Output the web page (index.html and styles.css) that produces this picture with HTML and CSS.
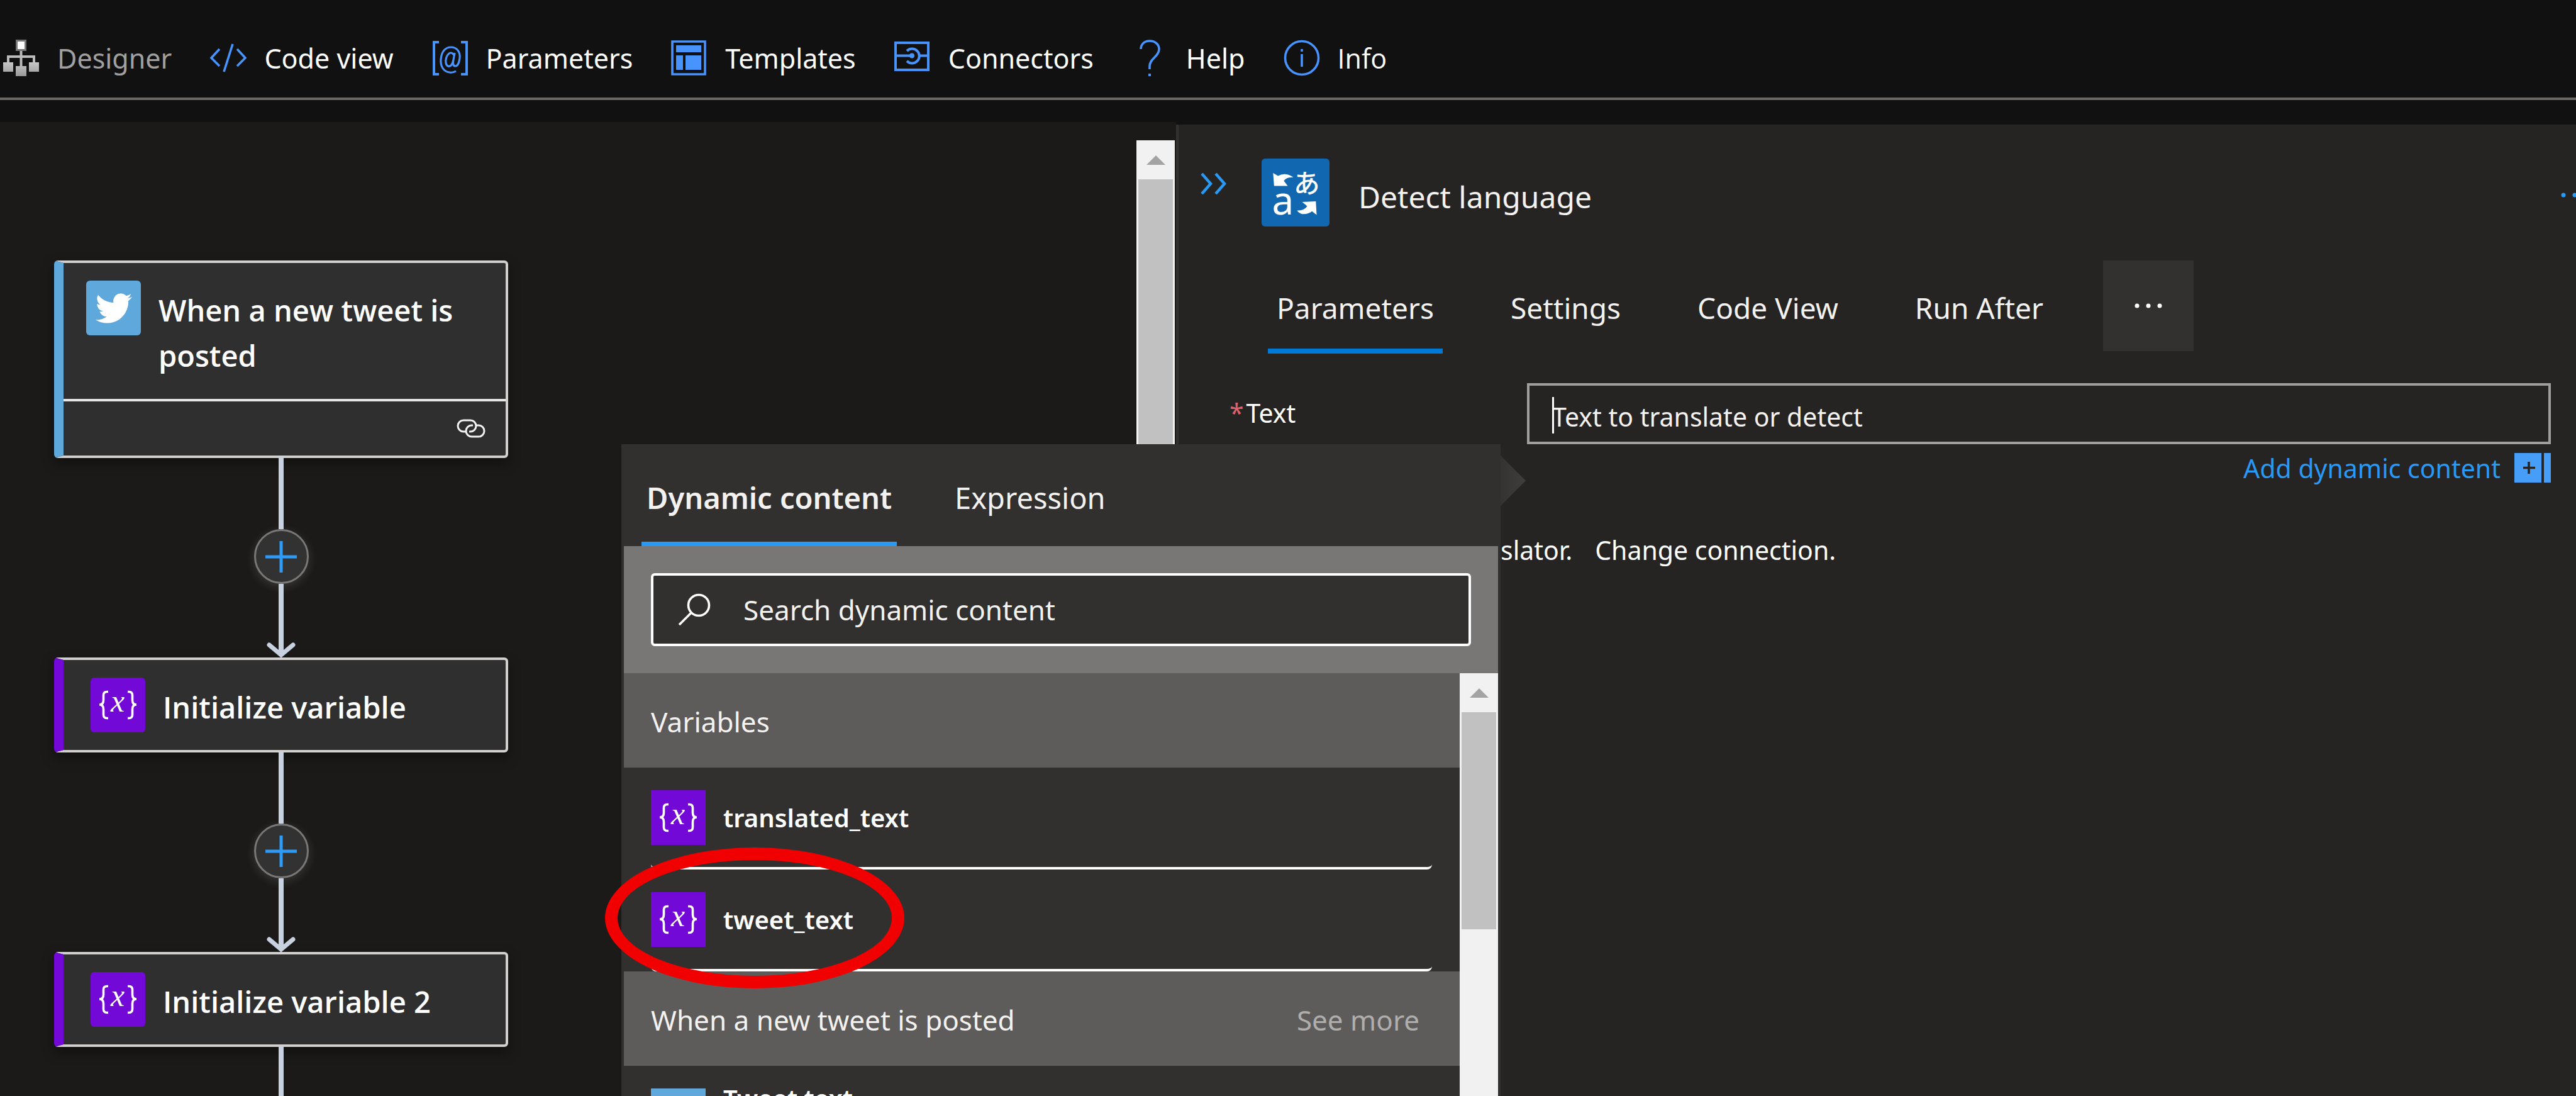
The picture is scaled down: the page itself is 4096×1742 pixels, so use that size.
FILE: index.html
```html
<!DOCTYPE html>
<html lang="en">
<head>
<meta charset="utf-8">
<title>Logic app designer</title>
<link rel="stylesheet" href="styles.css">
</head>
<body>
<svg class="defs" aria-hidden="true">
  <symbol id="braces" viewBox="0 0 87 87">
    <g fill="none" stroke="#fff" stroke-width="3.6">
      <path d="M28 22.500H26Q20.500 22.500 20.500 28V36Q20.500 43 14 43Q20.500 43 20.500 50V59Q20.500 64.500 26 64.500H28"/>
      <path d="M59 22.500H61Q66.500 22.500 66.500 28V36Q66.500 43 73 43Q66.500 43 66.500 50V59Q66.500 64.500 61 64.500H59"/>
    </g>
  </symbol>
</svg>
<div class="page">
  <header class="toolbar">
    <button class="tool tool-off" type="button">
      <svg class="tool-icon" viewBox="0 0 58 58"><defs><linearGradient id="gr" x1="0" y1="0" x2="0" y2="1"><stop offset="0" stop-color="#c8c8c8"/><stop offset="1" stop-color="#999"/></linearGradient></defs><path d="M28.500 18V42M8 37V27H49V37" fill="none" stroke="#bbb" stroke-width="4"/><rect x="21.500" y="1.500" width="14" height="15" fill="#fff" stroke="#777" stroke-width="3"/><path d="M0 36H16V51H0ZM20 42H37V58H20ZM41 36H57V51H41Z" fill="url(#gr)"/></svg>
      Designer
    </button>
    <button class="tool" type="button">
      <svg class="tool-icon" viewBox="0 0 58 58"><path d="M15 15L2 29L15 42M43 15L56 29L43 42M36 7L22 51" fill="none" stroke="#4894fe" stroke-width="3.6"/></svg>
      Code view
    </button>
    <button class="tool" type="button">
      <svg class="tool-icon" viewBox="0 0 58 58"><path d="M11 4H3V55H11M46 4H55V55H46" fill="none" stroke="#4894fe" stroke-width="4"/><path d="M38 50Q33 53 28 52C18 51 13 42 14 31C15 19 21 12 30 12C40 12 45 20 44 29C43 37 41 42 37 42C33 42 33 37 34 32L36 21M35 25C33 21 30 20 27 22C23 25 21 32 22 37C23 43 28 44 31 40Q33 37 34 32" fill="none" stroke="#4894fe" stroke-width="3.2"/></svg>
      Parameters
    </button>
    <button class="tool" type="button">
      <svg class="tool-icon" viewBox="0 0 58 58"><path d="M2 3H54V55H2Z" fill="none" stroke="#4894fe" stroke-width="3.6"/><path d="M8 9H48V20H8ZM8 25H19V48H8ZM23 25H48V48H23Z" fill="#4894fe"/></svg>
      Templates
    </button>
    <button class="tool" type="button">
      <svg class="tool-icon" viewBox="0 0 58 58"><path d="M2 5H54V48H2ZM2 25.500H28M40 25.500H54M20 18A11.500 11.500 0 1 1 20 34" fill="none" stroke="#4894fe" stroke-width="4"/><circle cx="28" cy="25.500" r="4" fill="#4894fe"/></svg>
      Connectors
    </button>
    <button class="tool" type="button">
      <svg class="tool-icon" viewBox="0 0 58 58"><path d="M14 15C14 7 20 2 28 2C37 2 43 8 43 15C43 27 28 30 28 42V47" fill="none" stroke="#4894fe" stroke-width="3.600"/><path d="M26 54H30V58H26Z" fill="#4894fe"/></svg>
      Help
    </button>
    <button class="tool sans-i" type="button">
      <svg class="tool-icon" viewBox="0 0 58 58"><circle cx="29" cy="29" r="26.500" fill="none" stroke="#4894fe" stroke-width="3.600"/><path d="M29 15V19M29 23V43" stroke="#4894fe" stroke-width="3.600"/></svg>
      Info
    </button>
  </header>

  <main class="work">
    <section class="canvas" aria-label="Workflow">
      <div class="flow">
        <article class="card card-trigger">
          <div class="card-main">
            <span class="card-icon twitter"><svg viewBox="0 0 24 24" width="58" height="58"><path fill="#fff" d="M23.953 4.570a10 10 0 0 1-2.825.775 4.958 4.958 0 0 0 2.163-2.723c-.951.555-2.005.959-3.127 1.184a4.920 4.920 0 0 0-8.384 4.482C7.690 8.095 4.067 6.130 1.640 3.162a4.822 4.822 0 0 0-.666 2.475c0 1.710.87 3.213 2.188 4.096a4.904 4.904 0 0 1-2.228-.616v.06a4.923 4.923 0 0 0 3.946 4.827 4.996 4.996 0 0 1-2.212.085 4.936 4.936 0 0 0 4.604 3.417 9.867 9.867 0 0 1-6.102 2.105c-.390 0-.779-.023-1.170-.067a13.995 13.995 0 0 0 7.557 2.209c9.053 0 13.998-7.496 13.998-13.985 0-.210 0-.420-.015-.630A9.935 9.935 0 0 0 24 4.590z"/></svg></span>
            <h2 class="card-title">When a new tweet is posted</h2>
          </div>
          <div class="card-foot"><svg viewBox="0 0 46 30" width="46" height="30" fill="none" stroke="#f3f2f1" stroke-width="3"><path d="M15 20H11A9 9 0 0 1 11 2H22A9 9 0 0 1 22 20H20"/><path d="M26 10H24A9 9 0 0 0 24 28H35A9 9 0 0 0 35 10H31"/></svg></div>
        </article>
        <div class="link">
          <i class="line line-top"></i>
          <button class="add" type="button" aria-label="Add step"><svg viewBox="0 0 50 50" width="50" height="50"><path d="M25 0V50M0 25H50" stroke="#2f9bf8" stroke-width="5"/></svg></button>
          <i class="line line-end"></i>
          <svg class="arrow" viewBox="0 0 46 24"><path d="M4 4L23 20L42 4" fill="none" stroke="#c8d1e0" stroke-width="7" stroke-linecap="round"/></svg>
        </div>
        <article class="card card-var">
          <div class="card-main">
            <svg class="card-icon variable" viewBox="0 0 87 87"><use href="#braces"/><text x="43" y="54" class="variable-x">x</text></svg>
            <h2 class="card-title">Initialize variable</h2>
          </div>
        </article>
        <div class="link">
          <i class="line line-top"></i>
          <button class="add" type="button" aria-label="Add step"><svg viewBox="0 0 50 50" width="50" height="50"><path d="M25 0V50M0 25H50" stroke="#2f9bf8" stroke-width="5"/></svg></button>
          <i class="line line-end"></i>
          <svg class="arrow" viewBox="0 0 46 24"><path d="M4 4L23 20L42 4" fill="none" stroke="#c8d1e0" stroke-width="7" stroke-linecap="round"/></svg>
        </div>
        <article class="card card-var">
          <div class="card-main">
            <svg class="card-icon variable" viewBox="0 0 87 87"><use href="#braces"/><text x="43" y="54" class="variable-x">x</text></svg>
            <h2 class="card-title">Initialize variable 2</h2>
          </div>
        </article>
        <i class="line line-rest"></i>
      </div>
      <div class="scrollbar canvas-scroll">
        <span class="scroll-up"></span>
        <span class="scroll-thumb"></span>
      </div>
    </section>

    <section class="panel" aria-label="Detect language">
      <header class="panel-head">
        <button class="collapse" type="button" aria-label="Collapse"><svg viewBox="0 0 44 34" width="44" height="34"><path d="M3 1L17 17L3 33M25 1L39 17L25 33" fill="none" stroke="#2899f5" stroke-width="4.500"/></svg></button>
        <svg class="panel-icon" viewBox="0 0 348 348">
          <rect width="348" height="348" rx="18" fill="#1267b1"/>
          <path fill="#fff" d="M59 74L84 89Q112 74 140 84Q154 88 162 97Q128 94 114 114L134 140H64ZM282 288L258 270Q240 286 208 284Q190 280 182 266Q216 268 234 244L208 222L278 219Z"/>
          <text x="53" y="286" class="glyph-a">a</text>
          <text x="164" y="176" class="glyph-ja">あ</text>
        </svg>
        <h1 class="panel-title">Detect language</h1>
        <button class="panel-more" type="button" aria-label="More commands"><svg viewBox="0 0 44 8" width="44" height="8" fill="#2899f5"><circle cx="4" cy="4" r="3.500"/><circle cx="22" cy="4" r="3.500"/><circle cx="40" cy="4" r="3.500"/></svg></button>
      </header>
      <nav class="tabs">
        <button class="tab tab-on" type="button">Parameters</button>
        <button class="tab" type="button">Settings</button>
        <button class="tab" type="button">Code View</button>
        <button class="tab" type="button">Run After</button>
        <button class="tab-more" type="button" aria-label="More tabs"><svg viewBox="0 0 44 8" width="44" height="8" fill="#fff"><circle cx="4" cy="4" r="3.500"/><circle cx="22" cy="4" r="3.500"/><circle cx="40" cy="4" r="3.500"/></svg></button>
      </nav>
      <div class="field">
        <label class="field-label" for="text"><span class="required">*</span>Text</label>
        <span class="field-box"><input class="field-input" id="text" type="text" placeholder="Text to translate or detect"></span>
      </div>
      <div class="dynamic">
        <a class="dynamic-link" href="#dynamic">Add dynamic content</a>
        <svg viewBox="0 0 58 47" width="58" height="47"><path d="M0 0H43V47H0ZM47 0H58V47H47Z" fill="#479ef8"/><path d="M23 14V33M14 23.500H33" stroke="#252423" stroke-width="3.600"/></svg>
      </div>
      <p class="connection"><span>slator.</span><a class="connection-link" href="#connection">Change connection.</a></p>
    </section>
  </main>

  <aside class="popup" id="dynamic" aria-label="Dynamic content">
    <nav class="popup-tabs">
      <button class="popup-tab popup-tab-on" type="button">Dynamic content</button>
      <button class="popup-tab" type="button">Expression</button>
    </nav>
    <div class="popup-body">
      <div class="search">
        <label class="search-box">
          <svg viewBox="0 0 52 52" width="52" height="52" fill="none" stroke="#fff" stroke-width="3.600"><circle cx="33" cy="19" r="16.500"/><path d="M21 31L2 50"/></svg>
          <input class="search-input" type="search" placeholder="Search dynamic content" aria-label="Search dynamic content">
        </label>
      </div>
      <div class="results">
        <div class="groups">
          <div class="group-head"><h3 class="group-title">Variables</h3></div>
          <ul class="items">
            <li><button class="item" type="button"><svg class="item-icon variable" viewBox="0 0 87 87"><use href="#braces"/><text x="43" y="54" class="variable-x">x</text></svg>translated_text</button></li>
            <li><button class="item" type="button"><svg class="item-icon variable" viewBox="0 0 87 87"><use href="#braces"/><text x="43" y="54" class="variable-x">x</text></svg>tweet_text</button></li>
          </ul>
          <div class="group-head"><h3 class="group-title">When a new tweet is posted</h3><button class="see-more" type="button">See more</button></div>
          <ul class="items">
            <li><button class="item item-tall" type="button"><span class="item-icon twitter"></span>Tweet text</button></li>
          </ul>
        </div>
        <div class="scrollbar">
          <span class="scroll-up"></span>
          <span class="scroll-thumb scroll-thumb-short"></span>
        </div>
      </div>
    </div>
  </aside>
  <svg class="beak" viewBox="0 0 40 80"><defs><linearGradient id="bk"><stop offset="0" stop-color="#343331"/><stop offset="1" stop-color="#3f3e3c"/></linearGradient></defs><path d="M0 0L40 40L0 80Z" fill="url(#bk)"/></svg>
  <div class="marker"></div>
</div>
</body>
</html>
```

FILE: styles.css
```css
* { box-sizing: border-box; }
body {
  margin: 0;
  background: #111;
  color: #fff;
  font-family: "Noto Sans", "Open Sans", sans-serif;
  font-size: 44px;
}
h1, h2, h3, p, ul { margin: 0; padding: 0; font-weight: 400; font-size: inherit; list-style: none; }
button, input {
  margin: 0;
  padding: 0;
  border: 0;
  background: none;
  color: inherit;
  font: inherit;
}
button { white-space: nowrap; }
a { text-decoration: none; color: inherit; }
svg { display: block; flex: none; }
input { outline: 0; }
input::placeholder { color: #f3f2f1; opacity: 1; }
.defs { position: absolute; width: 0; height: 0; }
.variable-x { font: italic 50px "Liberation Serif", serif; fill: #fff; text-anchor: middle; }

.page {
  position: relative;
  display: flex;
  flex-direction: column;
  height: 100vh;
  overflow: hidden;
}

/* Toolbar */
.toolbar {
  display: flex;
  gap: 61px;
  padding: 48px 5px 19px;
  border-bottom: 4px solid #6a6866;
  margin-bottom: 35px;
}
.tool { display: flex; align-items: center; gap: 28px; height: 88px; font-size: 43px; }
.tool-off { color: #a0a0a0; }
.tool-icon { width: 58px; height: 58px; }
.sans-i { font-family: "Open Sans", sans-serif; }

.work {
  flex: 1;
  min-height: 0;
  display: grid;
  grid-template-columns: minmax(0, 1870fr) minmax(0, 2226fr);
}

/* Workflow canvas */
.canvas {
  display: flex;
  justify-content: space-between;
  min-height: 0;
  padding-top: 29px;
  background: #1b1a19;
}
.flow {
  display: flex;
  flex-direction: column;
  align-items: center;
  width: 722px;
  margin-left: 86px;
  padding-top: 191px;
}
.card {
  flex: none;
  width: 100%;
  border: 4px solid #d2d0ce;
  border-left: 15px solid #7309d6;
  border-radius: 6px;
  background: #2f2f2f;
  box-shadow: 0 8px 20px rgba(0, 0, 0, .4);
}
.card-trigger { border-left-color: #5fa8dc; }
.card-main { display: flex; align-items: flex-start; gap: 28px; height: 143px; padding: 28px 43px; }
.card-trigger .card-main { height: 216px; padding-left: 36px; padding-right: 36px; }
.card-icon { display: flex; align-items: center; justify-content: center; flex: none; width: 87px; height: 87px; border-radius: 6px; }
.twitter { background: #5fa8dc; }
.variable { background: #7309d6; }
.card-title { font: 600 47px/72px "Open Sans", sans-serif; padding-top: 11px; }
.card-foot { display: flex; justify-content: flex-end; align-items: center; height: 90px; padding: 0 32px 0 0; border-top: 4px solid #e8e6e4; }
.link { position: relative; display: flex; flex-direction: column; align-items: center; }
.line { flex: none; width: 8px; background: #c8d1e0; }
.line-top { height: 113px; }
.line-end { height: 113px; margin-bottom: 4px; }
.line-rest { flex: 1; }
.add {
  display: flex;
  align-items: center;
  justify-content: center;
  width: 87px;
  height: 87px;
  border: 3px solid #7a7876;
  border-radius: 50%;
  background: #323232;
  box-shadow: 0 4px 16px rgba(255, 255, 255, .14);
}
.arrow { position: absolute; bottom: 0; width: 46px; height: 24px; }

/* Scrollbars */
.scrollbar { display: flex; flex-direction: column; width: 61px; padding: 0 3px; background: #f1f1f1; }
.scroll-up { display: flex; justify-content: center; align-items: center; height: 62px; flex: none; }
.scroll-up::before { content: ""; border: 15px solid transparent; border-top: 0; border-bottom: 15px solid #a3a3a3; }
.scroll-thumb { flex: 1; background: #c1c1c1; }
.scroll-thumb-short { flex: 0 0 345px; }
.canvas-scroll { margin-right: 2px; }

/* Side panel */
.panel {
  margin-top: 4px;
  padding-top: 54px;
  border-left: 4px solid #32312f;
  background: #252423;
  overflow: hidden;
}
.panel-head { display: flex; align-items: center; height: 108px; padding-left: 34px; margin-bottom: 54px; }
.collapse { align-self: flex-start; height: 80px; margin-right: 54px; }
.panel-icon { width: 108px; height: 108px; margin-right: 46px; }
.glyph-a { font: 400 200px "Noto Sans", sans-serif; fill: #fff; }
.glyph-ja { font: 500 134px "Noto Sans CJK JP", sans-serif; fill: #fff; }
.panel-title { font-size: 48px; padding-top: 13px; color: #f3f2f1; }
.panel-more { margin: 8px -20px 0 auto; }
.tabs { display: flex; gap: 94px; height: 148px; padding-left: 142px; }
.tab { padding: 2px 14px 0; font-size: 46px; color: #f3f2f1; }
.tab-on { box-shadow: inset 0 -8px #0078d4; }
.tab-more { display: flex; align-items: center; justify-content: center; width: 144px; height: 144px; margin-left: -13px; background: #323130; }
.field { display: grid; grid-template-columns: 473fr 1628fr; align-items: center; padding: 47px 40px 14px 81px; }
.field-label { padding-bottom: 4px; font-size: 41px; }
.required { margin-right: 4px; color: #e2606a; }
.field-box { position: relative; }
.field-box::before { content: ""; position: absolute; left: 40px; top: 22px; width: 3px; height: 58px; background: #fff; }
.field-input { display: block; width: 100%; height: 97px; padding: 8px 36px 0; border: 4px solid #a19f9d; font-size: 41px; }
.dynamic { display: flex; align-items: center; justify-content: flex-end; gap: 22px; height: 47px; padding-right: 40px; color: #2899f5; font-size: 41px; }
.connection { display: flex; gap: 36px; margin-top: 77px; padding-left: 512px; font-size: 41px; line-height: 60px; }

/* Dynamic content picker, floating over canvas and panel */
.popup {
  position: absolute;
  left: 988px;
  top: 706px;
  bottom: 0;
  width: 1398px;
  overflow: hidden;
  background: #31302f;
}
.popup-tabs { display: flex; gap: 84px; height: 162px; padding-left: 32px; }
.popup-tab { padding: 8px 8px 0; font-size: 47px; color: #f3f2f1; }
.popup-tab-on { font-weight: 600; box-shadow: inset 0 -7px #2899f5; }
.popup-body { padding: 0 4px; }
.search { padding: 43px; background: #797775; }
.search-box { display: flex; align-items: center; gap: 52px; height: 116px; padding-left: 39px; border: 4px solid #fff; border-radius: 6px; background: #31302f; }
.search-input { flex: 1; font-size: 44px; appearance: none; }
.results { display: flex; }
.groups { flex: 1; }
.group-head { display: flex; align-items: center; justify-content: space-between; height: 150px; padding: 3px 64px 0 43px; background: #5d5c5a; color: #f3f2f1; }
.see-more { color: #b0aeac; }
.items { padding: 0 44px 0 43px; }
.item { display: flex; align-items: center; gap: 28px; width: 100%; height: 162px; border-bottom: 4px solid #fff; border-radius: 8px; font-size: 40px; font-weight: 600; }
.item-icon { width: 87px; height: 87px; }
.item-tall { align-items: flex-start; padding-top: 24px; line-height: 56px; }
.item-tall .item-icon { margin-top: 12px; }
.beak { position: absolute; left: 2386px; top: 724px; width: 40px; height: 80px; }

/* Highlight ring around tweet_text */
.marker { position: absolute; left: 962px; top: 1347px; width: 476px; height: 224px; border: 20px solid #f00000; border-radius: 50%; }
```
